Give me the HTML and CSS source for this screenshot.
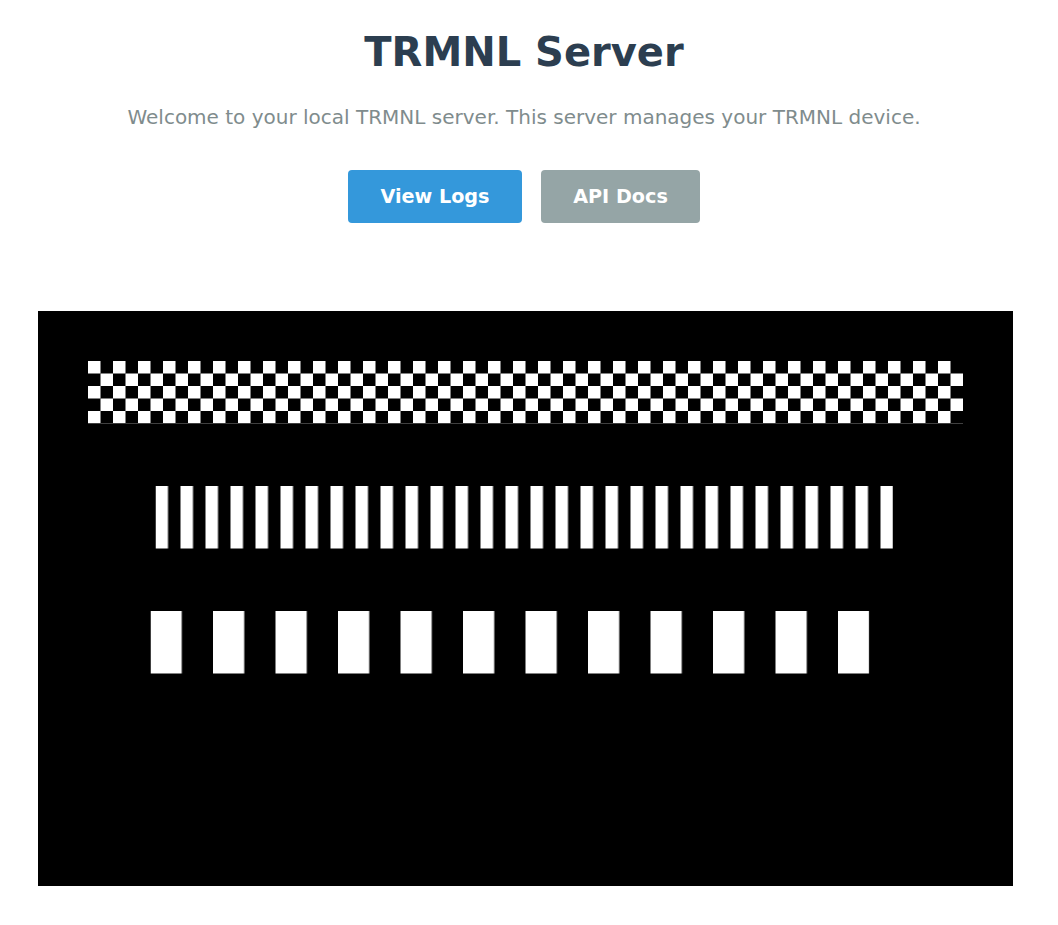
FILE: index.html
```html
<!DOCTYPE html>
<html lang="en">
<head>
<meta charset="utf-8">
<title>TRMNL Server</title>
<link rel="stylesheet" href="styles.css">
</head>
<body>
<main class="page">
  <h1 class="title">TRMNL Server</h1>
  <p class="subtitle">Welcome to your local TRMNL server. This server manages your TRMNL device.</p>
  <div class="actions">
    <a class="btn btn-primary" href="#">View Logs</a>
    <a class="btn btn-secondary" href="#">API Docs</a>
  </div>
  <div class="screen">
    <svg class="screen-svg" width="975" height="575" viewBox="0 0 975 575" xmlns="http://www.w3.org/2000/svg">
      <defs>
        <pattern id="checker" patternUnits="userSpaceOnUse" x="0" y="0" width="25" height="25">
          <rect x="0" y="0" width="12.5" height="12.5" fill="#fff"/>
          <rect x="12.5" y="12.5" width="12.5" height="12.5" fill="#fff"/>
        </pattern>
        <pattern id="thin" patternUnits="userSpaceOnUse" x="117.5" y="0" width="25" height="575">
          <rect x="0" y="0" width="12.5" height="575" fill="#fff"/>
        </pattern>
        <pattern id="wide" patternUnits="userSpaceOnUse" x="112.5" y="0" width="62.5" height="575">
          <rect x="0" y="0" width="31.25" height="575" fill="#fff"/>
        </pattern>
      </defs>
      <rect x="0" y="0" width="975" height="575" fill="#000"/>
      <rect x="50" y="50" width="875" height="62.5" fill="url(#checker)"/>
      <rect x="117.5" y="175" width="737.5" height="62.5" fill="url(#thin)"/>
      <rect x="112.5" y="300" width="718.75" height="62.5" fill="url(#wide)"/>
    </svg>
  </div>
</main>
</body>
</html>
```

FILE: styles.css
```css
html, body {
  margin: 0;
  padding: 0;
  background: #ffffff;
}

body {
  font-family: "DejaVu Sans", "Liberation Sans", sans-serif;
}

.page {
  width: 1048px;
  display: flex;
  flex-direction: column;
  align-items: center;
  text-align: center;
}

.title {
  margin: 29px 0 0;
  font-size: 40px;
  line-height: 47px;
  font-weight: bold;
  color: #2c3e50;
}

.subtitle {
  margin: 30px 0 0;
  font-size: 20px;
  line-height: 23px;
  color: #7f8c8d;
}

.actions {
  margin-top: 41px;
  display: flex;
  gap: 19px;
}

.btn {
  display: block;
  box-sizing: border-box;
  height: 53px;
  padding: 16px 0 0;
  font-size: 19.2px;
  line-height: 22px;
  font-weight: bold;
  color: #ffffff;
  text-decoration: none;
  text-align: center;
  border-radius: 4px;
}

.btn-primary {
  background: #3498db;
  width: 174px;
}

.btn-secondary {
  background: #95a5a6;
  width: 159px;
}

.screen {
  margin-top: 88px;
  margin-left: 2px;
  width: 975px;
  height: 575px;
}

.screen-svg {
  display: block;
}
```
